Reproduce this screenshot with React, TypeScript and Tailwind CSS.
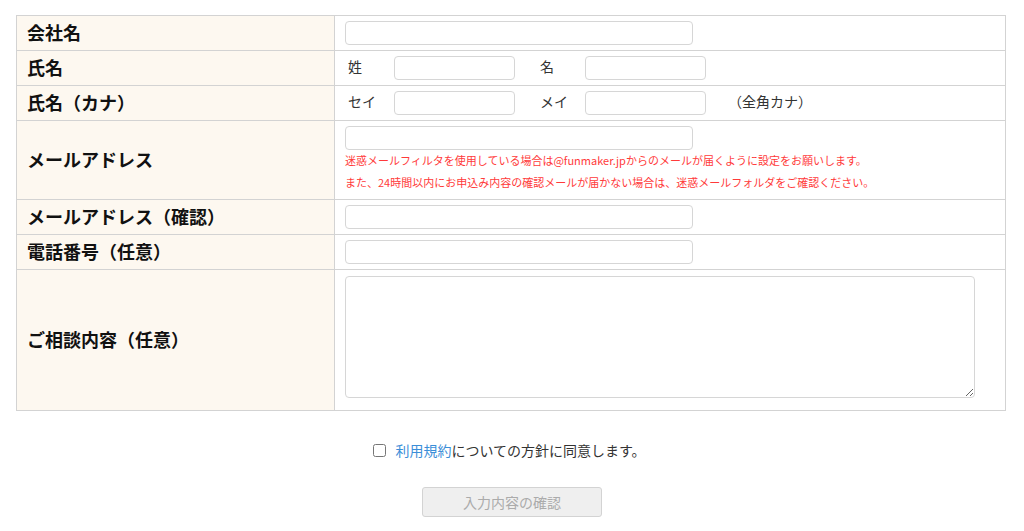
import React from "react";

const font = { fontFamily: '"Noto Sans CJK JP", "Noto Sans", sans-serif' };

function Label({ children, h }: { children: React.ReactNode; h: string }) {
  return (
    <td className={`${h} w-[318px] border border-[#d3d3d3] bg-[#fdf8f0] pl-[10px] align-middle text-[18px] leading-none font-bold text-[#111]`}>
      <span className="relative top-[-1px]">{children}</span>
    </td>
  );
}

const inputCls =
  "block h-[24px] rounded-[4px] border border-[#d6d6d6] bg-white outline-none";

export default function App() {
  return (
    <div style={font} className="w-[1024px] bg-white pt-[15px] pb-[15px] text-[#222]">
      <table className="ml-[16px] w-[990px] border-collapse">
        <tbody>
          <tr>
            <Label h="h-[35px]">会社名</Label>
            <td className="border border-[#d3d3d3] pl-[10px] align-middle">
              <input className={`${inputCls} w-[348px]`} />
            </td>
          </tr>
          <tr>
            <Label h="h-[35px]">氏名</Label>
            <td className="border border-[#d3d3d3] pl-[13px] align-middle">
              <div className="flex items-center text-[14px] leading-none text-[#333]">
                <span className="w-[46px] relative top-[-2px]">姓</span>
                <input className={`${inputCls} w-[121px]`} />
                <span className="ml-[25px] w-[45px] relative top-[-2px]">名</span>
                <input className={`${inputCls} w-[121px]`} />
              </div>
            </td>
          </tr>
          <tr>
            <Label h="h-[35px]">氏名（カナ）</Label>
            <td className="border border-[#d3d3d3] pl-[13px] align-middle">
              <div className="flex items-center text-[14px] leading-none text-[#333]">
                <span className="w-[46px] relative top-[-2px]">セイ</span>
                <input className={`${inputCls} w-[121px]`} />
                <span className="ml-[25px] w-[45px] relative top-[-2px]">メイ</span>
                <input className={`${inputCls} w-[121px]`} />
                <span className="ml-[22px] relative top-[-2px]">（全角カナ）</span>
              </div>
            </td>
          </tr>
          <tr>
            <Label h="h-[79px]">メールアドレス</Label>
            <td className="border border-[#d3d3d3] pl-[10px] align-top pt-[5px]">
              <input className={`${inputCls} w-[348px]`} />
              <p className="mt-[-1px] text-[11px] leading-[22px] text-[#ff3a3a]">
                迷惑メールフィルタを使用している場合は@funmaker.jpからのメールが届くように設定をお願いします。
              </p>
              <p className="text-[11px] leading-[22px] text-[#ff3a3a]">
                また、24時間以内にお申込み内容の確認メールが届かない場合は、迷惑メールフォルダをご確認ください。
              </p>
            </td>
          </tr>
          <tr>
            <Label h="h-[35px]">メールアドレス（確認）</Label>
            <td className="border border-[#d3d3d3] pl-[10px] align-middle">
              <input className={`${inputCls} w-[348px]`} />
            </td>
          </tr>
          <tr>
            <Label h="h-[35px]">電話番号（任意）</Label>
            <td className="border border-[#d3d3d3] pl-[10px] align-middle">
              <input className={`${inputCls} w-[348px]`} />
            </td>
          </tr>
          <tr>
            <Label h="h-[141px]">ご相談内容（任意）</Label>
            <td className="border border-[#d3d3d3] pl-[10px] align-top pt-[6px] pb-[12px]">
              <textarea className="block h-[122px] w-[630px] rounded-[4px] border border-[#d6d6d6] bg-white outline-none" />
            </td>
          </tr>
        </tbody>
      </table>

      <div className="relative left-[-2px] mt-[29px] flex items-center justify-center text-[14px] text-[#333]">
        <input type="checkbox" className="m-0 h-[13px] w-[13px] relative left-[-1px]" />
        <span className="ml-[8px]">
          <span className="text-[#3b8ed8]">利用規約</span>についての方針に同意します。
        </span>
      </div>

      <div className="mt-[26px] flex justify-center">
        <button
          disabled
          className="h-[30px] w-[180px] rounded-[3px] border border-[#d3d3d3] bg-[#efefef] text-[14px] text-[#ababab]"
        >
          入力内容の確認
        </button>
      </div>
    </div>
  );
}
